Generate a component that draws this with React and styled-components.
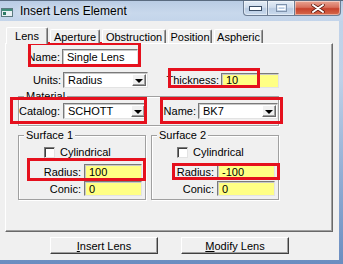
import React from 'react'
import styled, { createGlobalStyle } from 'styled-components'

const GlobalStyle = createGlobalStyle`
  html, body { margin: 0; padding: 0; }
  body {
    width: 343px;
    height: 264px;
    overflow: hidden;
    background: #f0f0f0;
    font-family: "Liberation Sans", Arial, sans-serif;
  }
`

const Window = styled.div`
  width: 343px;
  height: 264px;
  box-sizing: border-box;
  display: flex;
  flex-direction: column;
  background: linear-gradient(180deg, #c2d4ea 0%, #bfd1e8 30%, #8eaad2 70%, #6a8dc0 100%);
  overflow: hidden;
`

const TitleBar = styled.div`
  height: 21px;
  flex: none;
  display: flex;
  align-items: flex-start;
  background: linear-gradient(180deg, #b9cce4 0%, #c8d8ec 60%, #c3d4ea 100%);
  border-top: 1px solid #5a6b80;
  box-sizing: border-box;
`

const AppIcon = styled.svg`
  flex: none;
  margin: 7px 0 0 1px;
`

const Title = styled.div`
  margin: 3px 0 0 7px;
  font-size: 12px;
  line-height: 15px;
  color: #000;
  text-shadow: 0 0 6px rgba(255, 255, 255, 0.9);
`

const Controls = styled.div`
  margin-left: auto;
  margin-right: 2px;
  display: flex;
`

const CtlButton = styled.div`
  width: ${p => p.$w}px;
  height: 15px;
  box-sizing: border-box;
  display: flex;
  align-items: center;
  justify-content: center;
  border: 1px solid #6d7d93;
  border-top: none;
  border-left-width: ${p => (p.$first ? 1 : 0)}px;
  border-radius: ${p => p.$radius || '0'};
  background: ${p =>
    p.$close
      ? 'linear-gradient(180deg, #e8a593 0%, #d8705c 45%, #c7422c 55%, #d66a4c 100%)'
      : 'linear-gradient(180deg, #e4ecf6 0%, #cfdcec 45%, #b9cbe2 55%, #cadbee 100%)'};
  box-shadow: inset 0 0 0 1px rgba(255, 255, 255, 0.45);
`

const Client = styled.div`
  flex: 1;
  margin: 0 4px 4px 0;
  background: #f0f0f0;
  display: flex;
  flex-direction: column;
`

const TabStrip = styled.div`
  display: flex;
  align-items: flex-end;
  height: 17px;
  margin-top: 5px;
  padding-left: 6px;
  gap: 2px;
  position: relative;
  z-index: 1;
`

const Tab = styled.div`
  width: ${p => p.$w}px;
  height: ${p => (p.$active ? 17 : 14)}px;
  box-sizing: border-box;
  margin-bottom: ${p => (p.$active ? -1 : 0)}px;
  padding-top: ${p => (p.$active ? 2 : 1)}px;
  text-align: center;
  font-size: 11px;
  line-height: 12px;
  color: #000;
  background: #f0f0f0;
  border-top: 1px solid #fff;
  border-left: 1px solid #fff;
  border-right: 1px solid #696969;
  border-radius: 2px 2px 0 0;
  box-shadow: inset -1px 0 0 #a0a0a0;
`

const Panel = styled.div`
  margin-left: 5px;
  width: 328px;
  height: 189px;
  box-sizing: border-box;
  border: 1px solid;
  border-color: #fff #696969 #696969 #fff;
  box-shadow: inset -1px -1px 0 #a0a0a0;
  padding: 5px 0 0 12px;
  display: flex;
  flex-direction: column;
  align-items: flex-start;
`

const Row = styled.div`
  display: flex;
  align-items: center;
  margin-top: ${p => p.$mt || 0}px;
  margin-left: ${p => p.$ml || 0}px;
`

const Marked = styled.div`
  display: flex;
  align-items: center;
  gap: ${p => p.$gap || 2}px;
  position: relative;

  &::after {
    content: '';
    position: absolute;
    inset: ${p => p.$box};
    border: 3px solid #e5101d;
    pointer-events: none;
  }
`

const Label = styled.div`
  width: ${p => p.$w}px;
  text-align: right;
  font-size: 11px;
  color: #000;
  white-space: nowrap;
`

const Field = styled.div`
  width: ${p => p.$w}px;
  height: ${p => p.$h || 16}px;
  box-sizing: border-box;
  padding-left: 4px;
  display: flex;
  align-items: center;
  font-size: 11px;
  color: #000;
  background: ${p => (p.$yellow ? '#ffff84' : '#fff')};
  border: 1px solid;
  border-color: #7a7a7a #e3e3e3 #e3e3e3 #7a7a7a;
  box-shadow: inset 1px 1px 0 #c8c8c8;
`

const Combo = styled(Field)`
  padding-right: 1px;
  justify-content: space-between;
`

const DropButton = styled.div`
  width: 14px;
  height: 12px;
  box-sizing: border-box;
  display: flex;
  align-items: center;
  justify-content: center;
  background: #f0f0f0;
  border: 1px solid;
  border-color: #fff #696969 #696969 #fff;
  box-shadow: inset -1px -1px 0 #a0a0a0;

  &::before {
    content: '';
    border-left: 4px solid transparent;
    border-right: 4px solid transparent;
    border-top: 4px solid #000;
    margin-top: 1px;
  }
`

const GroupBox = styled.div`
  position: relative;
  width: ${p => p.$w}px;
  height: ${p => p.$h}px;
  box-sizing: border-box;
  border: 1px solid #a0a0a0;
  box-shadow: inset 1px 1px 0 #fff, 1px 1px 0 #fff;
  padding-top: ${p => p.$pt}px;
  display: flex;
  flex-direction: column;
  align-items: flex-start;
`

const Caption = styled.span`
  position: absolute;
  top: -7px;
  left: 5px;
  padding: 0 2px;
  background: #f0f0f0;
  font-size: 11px;
  line-height: 13px;
  color: #000;
`

const Surfaces = styled.div`
  display: flex;
  gap: 5px;
  margin-top: 9px;
`

const CheckBox = styled.div`
  width: 11px;
  height: 11px;
  box-sizing: border-box;
  background: #fff;
  border: 1px solid;
  border-color: #7a7a7a #e3e3e3 #e3e3e3 #7a7a7a;
  box-shadow: inset 1px 1px 0 #404040;
`

const CheckText = styled.span`
  margin-left: 5px;
  font-size: 11px;
  color: #000;
`

const ButtonBar = styled.div`
  display: flex;
  gap: 23px;
  margin-top: 5px;
  padding-left: 50px;
`

const Button = styled.div`
  width: 108px;
  height: 17px;
  box-sizing: border-box;
  display: flex;
  align-items: center;
  justify-content: center;
  font-size: 11px;
  color: #000;
  background: #f0f0f0;
  border: 1px solid;
  border-color: #fff #404040 #404040 #fff;
  box-shadow: inset -1px -1px 0 #a0a0a0;

  u { text-decoration: underline; }
`

const Surface = ({ title, radius, conic, box }) => (
  <GroupBox $w={128} $h={65} $pt={10}>
    <Caption>{title}</Caption>
    <Row $ml={25}>
      <CheckBox />
      <CheckText>Cylindrical</CheckText>
    </Row>
    <Row $mt={6}>
      <Marked $gap={3} $box={box}>
        <Label $w={62}>Radius:</Label>
        <Field $w={58} $h={15} $yellow>{radius}</Field>
      </Marked>
    </Row>
    <Row $mt={2}>
      <Label $w={62}>Conic:</Label>
      <Field $w={58} $h={15} $yellow style={{ marginLeft: 3 }}>{conic}</Field>
    </Row>
  </GroupBox>
)

const tabs = [
  { name: 'Lens', w: 42, active: true },
  { name: 'Aperture', w: 50 },
  { name: 'Obstruction', w: 64 },
  { name: 'Position', w: 44 },
  { name: 'Aspheric', w: 49 }
]

const App = () => {
  return (
    <>
      <GlobalStyle />
      <Window>
        <TitleBar>
          <AppIcon width="12" height="9" viewBox="0 0 12 9">
            <rect x="0.5" y="0.5" width="11" height="8" fill="#e8f0f4" stroke="#5c7a80" />
            <rect x="1" y="1" width="10" height="2" fill="#3f8f7a" />
            <rect x="2" y="4" width="3" height="3" fill="#2e7a66" />
          </AppIcon>
          <Title>Insert Lens Element</Title>
          <Controls>
            <CtlButton $w={25} $first $radius="0 0 0 4px">
              <svg width="13" height="5" viewBox="0 0 13 5">
                <rect x="0.5" y="0.5" width="12" height="4" fill="#fff" stroke="#3a4d66" />
              </svg>
            </CtlButton>
            <CtlButton $w={27}>
              <svg width="11" height="8" viewBox="0 0 11 8">
                <rect x="0.5" y="0.5" width="10" height="7" fill="none" stroke="#7f93ad" />
                <rect x="2" y="2.5" width="7" height="3" fill="none" stroke="#fff" />
              </svg>
            </CtlButton>
            <CtlButton $w={46} $close $radius="0 0 4px 0">
              <svg width="14" height="9" viewBox="0 0 14 9">
                <path d="M2 1 L12 8 M12 1 L2 8" stroke="#5a1a10" strokeWidth="3.4" strokeLinecap="round" />
                <path d="M2 1 L12 8 M12 1 L2 8" stroke="#fff" strokeWidth="2" strokeLinecap="round" />
              </svg>
            </CtlButton>
          </Controls>
        </TitleBar>

        <Client>
          <TabStrip>
            {tabs.map(t => (
              <Tab key={t.name} $w={t.w} $active={t.active}>{t.name}</Tab>
            ))}
          </TabStrip>

          <Panel>
            <Row>
              <Marked $box="-7px -3px -2px 10px">
                <Label $w={42}>Name:</Label>
                <Field $w={76}>Single Lens</Field>
              </Marked>
            </Row>

            <Row $mt={7}>
              <Label $w={43}>Units:</Label>
              <Combo $w={85} style={{ marginLeft: 2 }}>
                Radius
                <DropButton />
              </Combo>
              <Marked $box="-5px 19px 0 20px">
                <Label $w={71}>Thickness:</Label>
                <Field $w={58} $h={15} $yellow>10</Field>
              </Marked>
            </Row>

            <GroupBox $w={261} $h={30} $pt={6} style={{ marginTop: 8 }}>
              <Caption>Material</Caption>
              <Row>
                <Marked $gap={3} $box="-6px 0 -5px -9px">
                  <Label $w={41}>Catalog:</Label>
                  <Combo $w={84}>
                    SCHOTT
                    <DropButton />
                  </Combo>
                </Marked>
                <Marked $box="-6px -5px -5px 13px">
                  <Label $w={49}>Name:</Label>
                  <Combo $w={80}>
                    BK7
                    <DropButton />
                  </Combo>
                </Marked>
              </Row>
            </GroupBox>

            <Surfaces>
              <Surface title="Surface 1" radius="100" conic="0" box="-6px -4px -2px 8px" />
              <Surface title="Surface 2" radius="-100" conic="0" box="-1px -5px -1px 20px" />
            </Surfaces>
          </Panel>

          <ButtonBar>
            <Button><u>I</u>nsert Lens</Button>
            <Button><u>M</u>odify Lens</Button>
          </ButtonBar>
        </Client>
      </Window>
    </>
  )
}

export default App
